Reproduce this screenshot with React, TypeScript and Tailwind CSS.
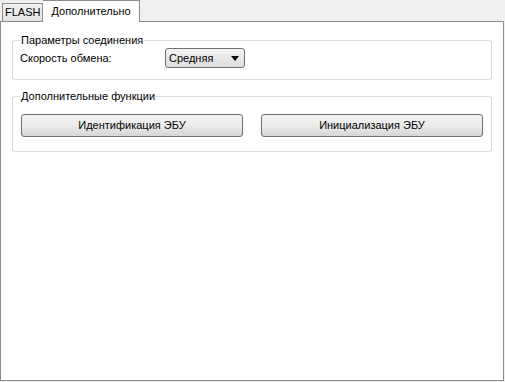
export default function App() {
  return (
    <div
      className="w-[505px] h-[382px] bg-[#f0f0f0] flex flex-col text-[11px] leading-[13px] text-black"
      style={{ fontFamily: '"Liberation Sans", Arial, sans-serif' }}
    >
      {/* Tabs */}
      <div className="flex items-end h-[21px] pl-[2px] relative z-10">
        <div className="h-[18px] px-[2px] flex items-center border border-b-0 border-[#898c95] bg-gradient-to-b from-[#f2f2f2] to-[#e3e3e3] text-black">
          FLASH
        </div>
        <div className="h-[22px] -mb-px px-[8px] flex items-center border border-b-0 border-l-0 border-[#898c95] bg-white">
          Дополнительно
        </div>
      </div>

      {/* Panel */}
      <div className="flex-1 mb-[1px] mr-[1px] border border-[#898c95] bg-white pt-[12px] px-[11px] flex flex-col gap-[10px]">
        <fieldset className="border border-[#d9dde0] rounded-[3px] px-[7px] pb-[11px]">
          <legend className="px-px">Параметры соединения</legend>
          <div className="flex items-center mt-px h-[20px]">
            <span className="w-[145px]">Скорость обмена:</span>
            <div className="w-[80px] h-[20px] flex items-center justify-between pl-[3px] pr-[5px] border border-[#707070] rounded-[3px] bg-gradient-to-b from-[#f4f4f4] to-[#dcdcdc]">
              <span>Средняя</span>
              <svg width="8" height="5" viewBox="0 0 8 5">
                <path d="M0 0 H8 L4 5 Z" fill="#000" />
              </svg>
            </div>
          </div>
        </fieldset>

        <fieldset className="border border-[#d9dde0] rounded-[3px] px-[8px] pb-[14px]">
          <legend className="px-px -ml-px">Дополнительные функции</legend>
          <div className="grid grid-cols-2 gap-[18px] mt-[11px]">
            <button className="h-[23px] border border-[#707070] rounded-[3px] bg-gradient-to-b from-[#f3f3f3] via-[#ebebeb] to-[#d6d6d6] text-center">
              Идентификация ЭБУ
            </button>
            <button className="h-[23px] border border-[#707070] rounded-[3px] bg-gradient-to-b from-[#f3f3f3] via-[#ebebeb] to-[#d6d6d6] text-center">
              Инициализация ЭБУ
            </button>
          </div>
        </fieldset>
      </div>
    </div>
  );
}
